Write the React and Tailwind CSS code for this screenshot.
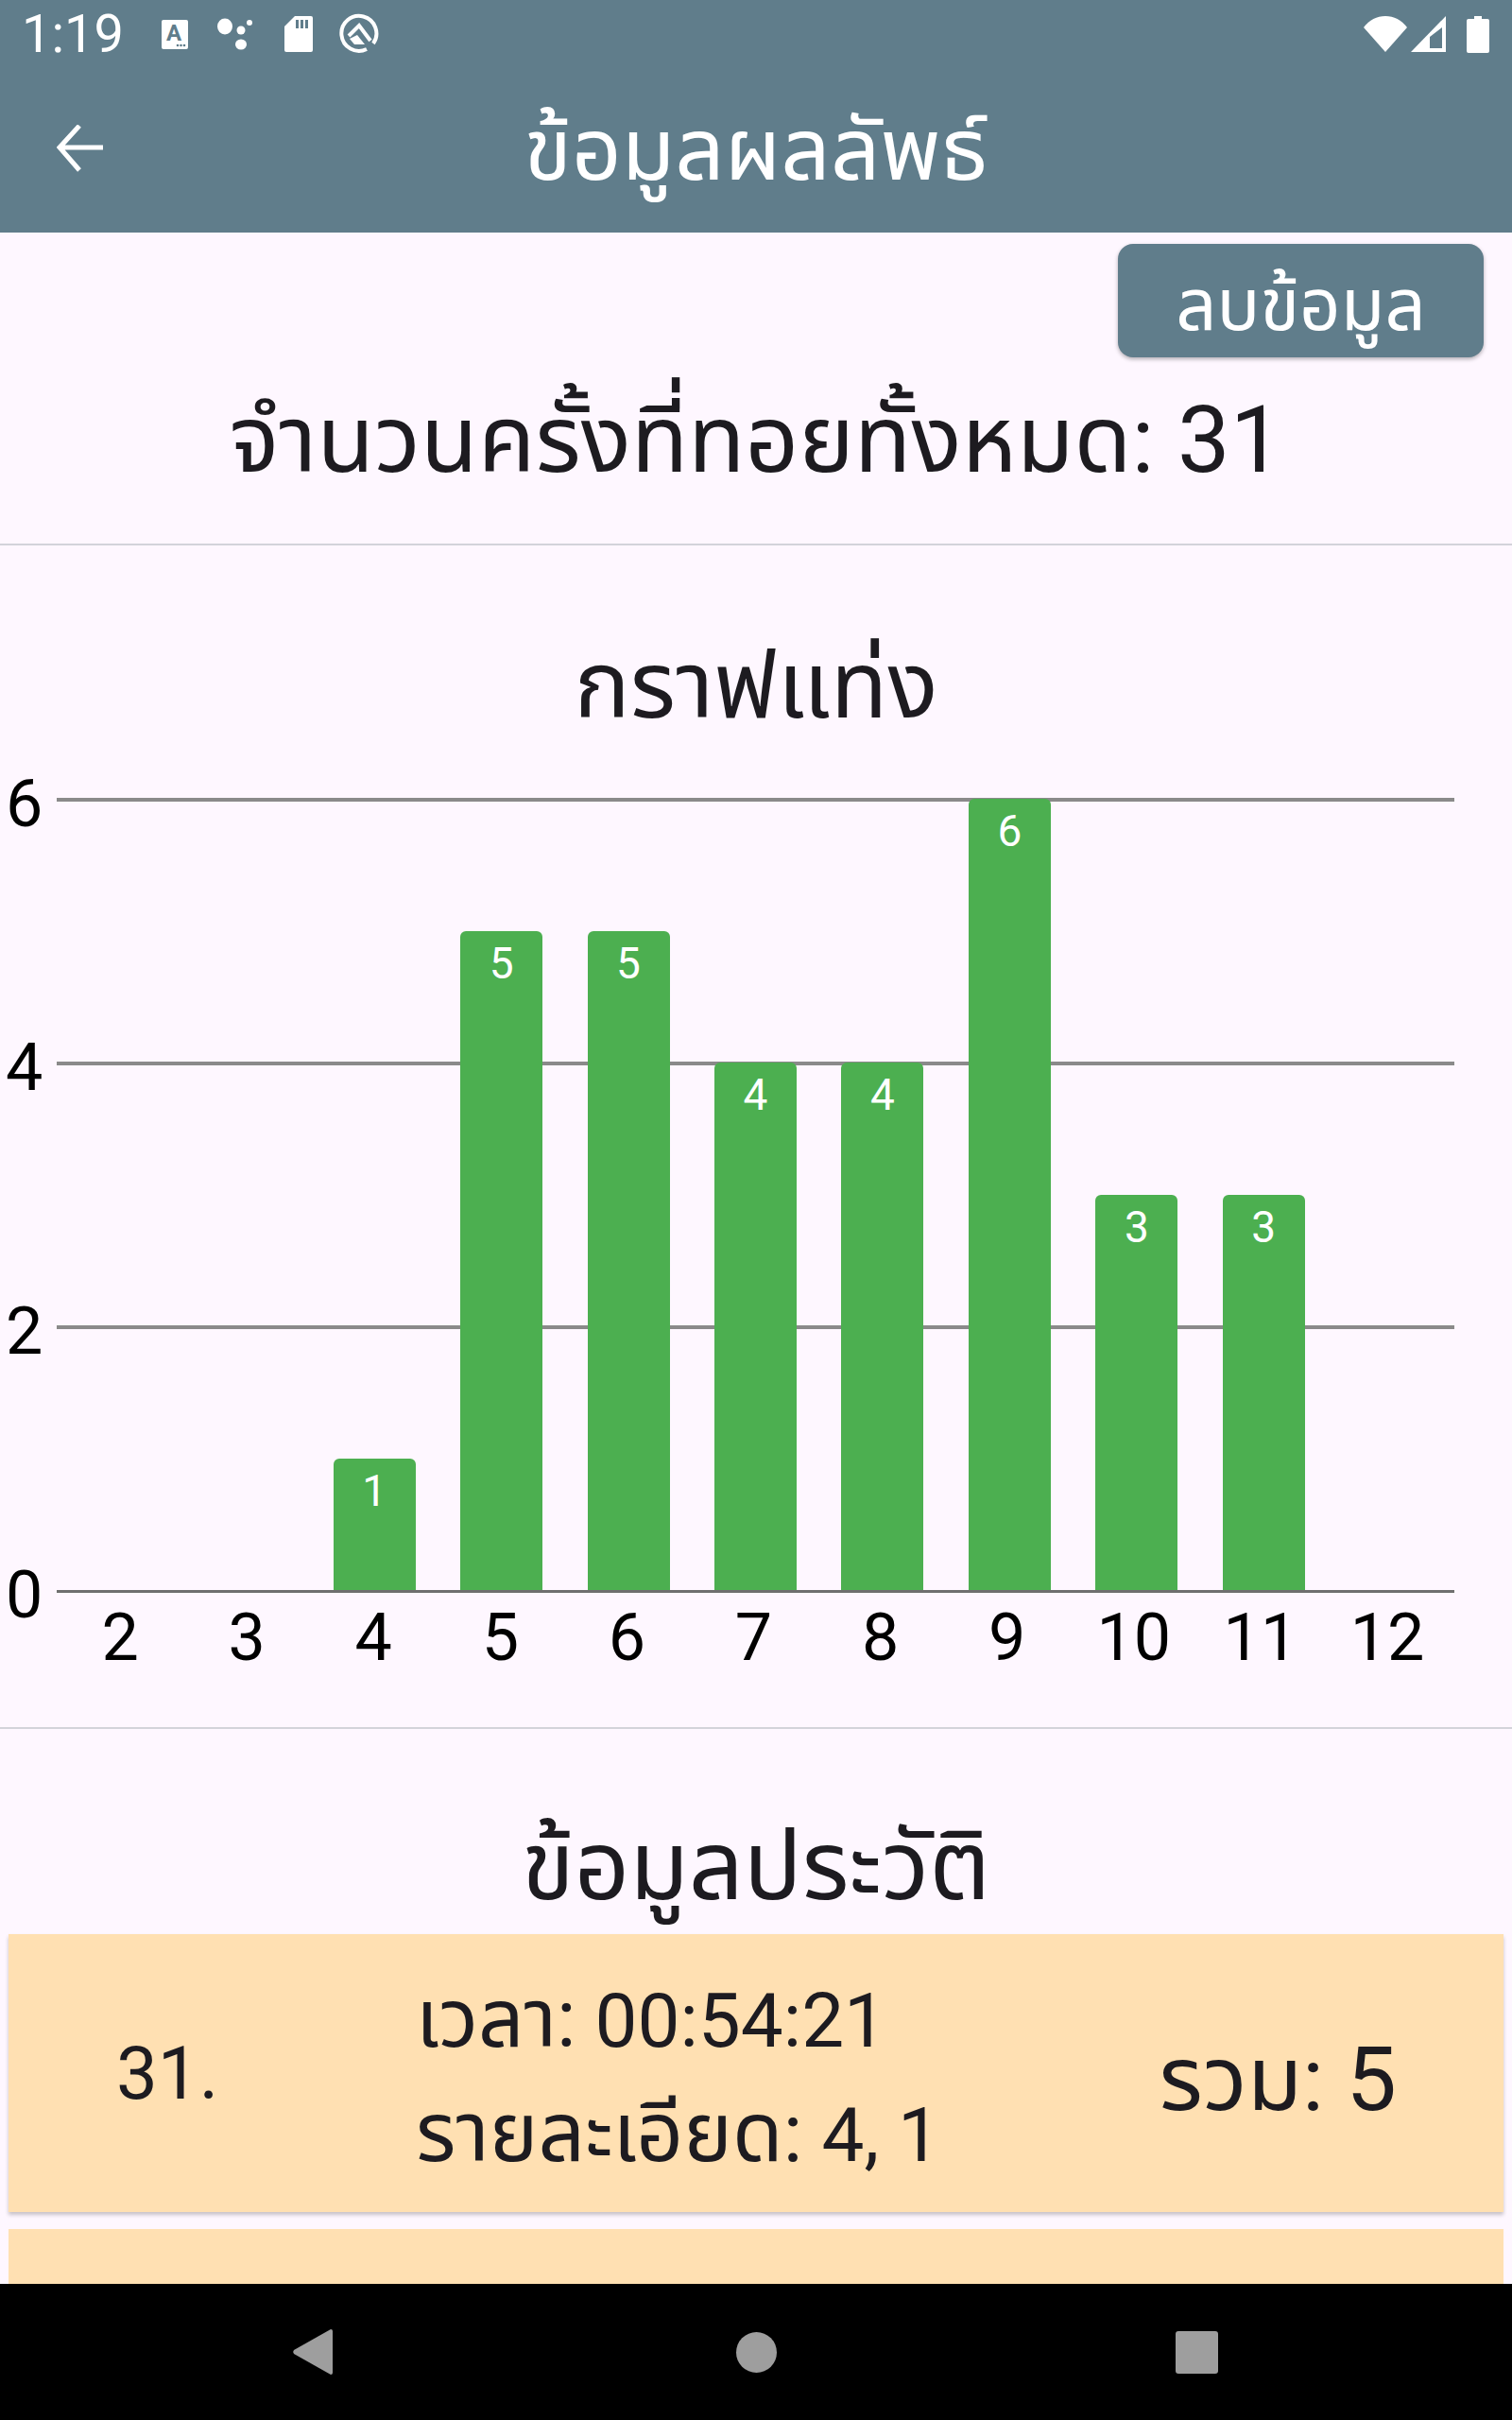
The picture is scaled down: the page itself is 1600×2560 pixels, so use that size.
const rolls = [
  { n: 2, v: 0 }, { n: 3, v: 0 }, { n: 4, v: 1 }, { n: 5, v: 5 }, { n: 6, v: 5 }, { n: 7, v: 4 },
  { n: 8, v: 4 }, { n: 9, v: 6 }, { n: 10, v: 3 }, { n: 11, v: 3 }, { n: 12, v: 0 },
];

const StatusIcons = () => (
  <div className="flex items-center">
    <svg width="30" height="34" viewBox="0 0 30 34" className="ml-[40px]">
      <rect x="0" y="2" width="28" height="31" rx="2" fill="#fff" />
      <text x="13" y="24" fontSize="24" fontWeight="700" textAnchor="middle" fill="#607d8b" fontFamily="Roboto, sans-serif">A</text>
      <circle cx="17" cy="29" r="1.3" fill="#607d8b" /><circle cx="20.5" cy="29" r="1.3" fill="#607d8b" /><circle cx="24" cy="29" r="1.3" fill="#607d8b" />
    </svg>
    <svg width="40" height="34" viewBox="0 0 40 34" className="ml-[28px]">
      <ellipse cx="9" cy="9" rx="8" ry="8.5" fill="#fff" />
      <ellipse cx="26" cy="28" rx="6" ry="5.5" fill="#fff" />
      <ellipse cx="26" cy="13" rx="4.5" ry="4.5" fill="#fff" />
      <ellipse cx="35" cy="5" rx="3" ry="3" fill="#fff" />
    </svg>
    <svg width="32" height="40" viewBox="0 0 32 40" className="ml-[31px]">
      <path d="M12 1h17a2 2 0 0 1 2 2v34a2 2 0 0 1-2 2H3a2 2 0 0 1-2-2V12z" fill="#fff" />
      <path d="M13 5h3v9h-3zM18 5h3v9h-3zM23 5h3v9h-3z" fill="#607d8b" />
    </svg>
    <svg width="44" height="44" viewBox="0 0 44 44" className="ml-[26px]">
      <path d="M30 38A18.5 18.5 0 1 1 37 32" fill="none" stroke="#fff" strokeWidth="4" />
      <path d="M11 24L22 13L34 29" fill="none" stroke="#fff" strokeWidth="4" />
      <path d="M20 23l8 10H17l-5-6z" fill="#fff" />
    </svg>
  </div>
);

const StatusRight = () => (
  <div className="flex items-center">
    <svg width="46" height="38" viewBox="0 0 46 38"><path d="M0 12C6 4 14 0 23 0s17 4 23 12L23 38z" fill="#fff" /></svg>
    <svg width="38" height="38" viewBox="0 0 38 38" className="ml-[4px]">
      <path d="M37 0v38H0z" fill="#fff" />
      <path d="M33 12v22H20V22z" fill="#607d8b" />
    </svg>
    <svg width="24" height="39" viewBox="0 0 24 39" className="ml-[21px]">
      <path d="M8 0h8v3h6a2 2 0 0 1 2 2v32a2 2 0 0 1-2 2H2a2 2 0 0 1-2-2V5a2 2 0 0 1 2-2h6z" fill="#fff" />
    </svg>
  </div>
);

const Chart = () => (
  <div className="mt-[56px] flex">
    <div className="relative h-[840px] w-[60px] shrink-0 text-[70px] text-black">
      {[[6, "top-[-35px]"], [4, "top-[244px]"], [2, "top-[523px]"], [0, "top-[802px]"]].map(([label, pos]) => (
        <span key={label} className={`absolute left-[6px] leading-[80px] ${pos}`}>{label}</span>
      ))}
    </div>
    <div className="w-[1479px]">
      <div className="relative h-[840px] border-b-[3px] border-[#6f6f6f]">
        <div className="absolute left-0 right-0 top-[-1px] h-[4px] bg-[#8a8a8a]" />
        <div className="absolute left-0 right-0 top-[278px] h-[4px] bg-[#8a8a8a]" />
        <div className="absolute left-0 right-0 top-[557px] h-[4px] bg-[#8a8a8a]" />
        <div className="absolute inset-0 flex items-end">
          {rolls.map((r) => (
            <div key={r.n} className="flex flex-1 justify-center">
              {r.v > 0 && (
                <div
                  className="w-[87px] rounded-t-[6px] bg-[#4caf50] pt-[14px] text-center text-[46px] leading-[40px] text-white"
                  style={{ height: r.v * 139.5 }}
                >
                  {r.v}
                </div>
              )}
            </div>
          ))}
        </div>
      </div>
      <div className="flex pr-[4px] pt-[7px] text-[70px] leading-[80px] text-black">
        {rolls.map((r) => (
          <div key={r.n} className="flex-1 text-center">{r.n}</div>
        ))}
      </div>
    </div>
  </div>
);

const HistoryCard = () => (
  <div className="mx-[9px] mt-[8px] flex h-[294px] items-center bg-[#ffe0b2] text-[#1d1b20] shadow-[0_3px_4px_rgba(0,0,0,0.22)]">
    <div className="w-[431px] pl-[114px] text-[78px]">31.</div>
    <div className="flex-1 pt-[8px] text-[80px] leading-[118px]">
      <div><span className="text-[85px]">เวลา:</span> 00:54:21</div>
      <div><span className="text-[87px]">รายละเอียด:</span> 4, 1</div>
    </div>
    <div className="pr-[113px] pt-[14px] text-[95px]">รวม: 5</div>
  </div>
);

export default function App() {
  return (
    <div className="flex h-[2560px] flex-col overflow-hidden bg-[#fef7ff] font-['Roboto','Noto_Sans','Noto_Sans_Thai',sans-serif]">
      <header className="h-[246px] shrink-0 bg-[#607d8b] text-white">
        <div className="flex h-[72px] items-center justify-between pl-[23px] pr-[24px]">
          <div className="flex items-center">
            <span className="text-[56px] leading-none">1:19</span>
            <StatusIcons />
          </div>
          <StatusRight />
        </div>
        <div className="relative flex h-[174px] items-center justify-center">
          <svg width="50" height="50" viewBox="0 0 50 50" className="absolute left-[60px] top-[60px]" fill="none" stroke="#fff" strokeWidth="5">
            <path d="M49 24H4M24 1L3 24l21 24" />
          </svg>
          <h1 className="text-[92px] font-normal leading-none">ข้อมูลผลลัพธ์</h1>
        </div>
      </header>

      <main className="min-h-0 flex-1 overflow-hidden">
        <div className="flex justify-end pr-[30px] pt-[12px]">
          <button className="h-[120px] w-[387px] rounded-[16px] bg-[#607d8b] pt-[8px] text-[76px] text-white shadow-[0_2px_4px_rgba(0,0,0,0.3)]">ลบข้อมูล</button>
        </div>
        <div className="h-[199px] border-b-2 border-[#d3d3da] pb-[24px] text-center text-[99px] leading-[174px] text-[#1d1b20]">
          จำนวนครั้งที่ทอยทั้งหมด: 31
        </div>
        <h2 className="mt-[84px] text-center text-[99px] leading-[128px] text-[#1d1b20]">กราฟแท่ง</h2>
        <Chart />
        <div className="mt-[55px] border-b-2 border-[#d3d3da]" />
        <h2 className="mt-[81px] text-center text-[102px] leading-[128px] text-[#1d1b20]">ข้อมูลประวัติ</h2>
        <HistoryCard />
        <div className="mx-[9px] mt-[18px] h-[120px] bg-[#ffe0b2]" />
      </main>

      <nav className="relative flex h-[144px] shrink-0 items-center bg-black">
        <svg width="44" height="50" viewBox="0 0 44 50" className="ml-[309px]">
          <path d="M41 1a2 2 0 0 1 2 2v44a2 2 0 0 1-2 2L2 27a3 3 0 0 1 0-4z" fill="#9e9e9e" />
        </svg>
        <div className="ml-[426px] h-[43px] w-[43px] rounded-full bg-[#9e9e9e]" />
        <div className="ml-[422px] h-[45px] w-[45px] rounded-[3px] bg-[#9e9e9e]" />
      </nav>
    </div>
  );
}
